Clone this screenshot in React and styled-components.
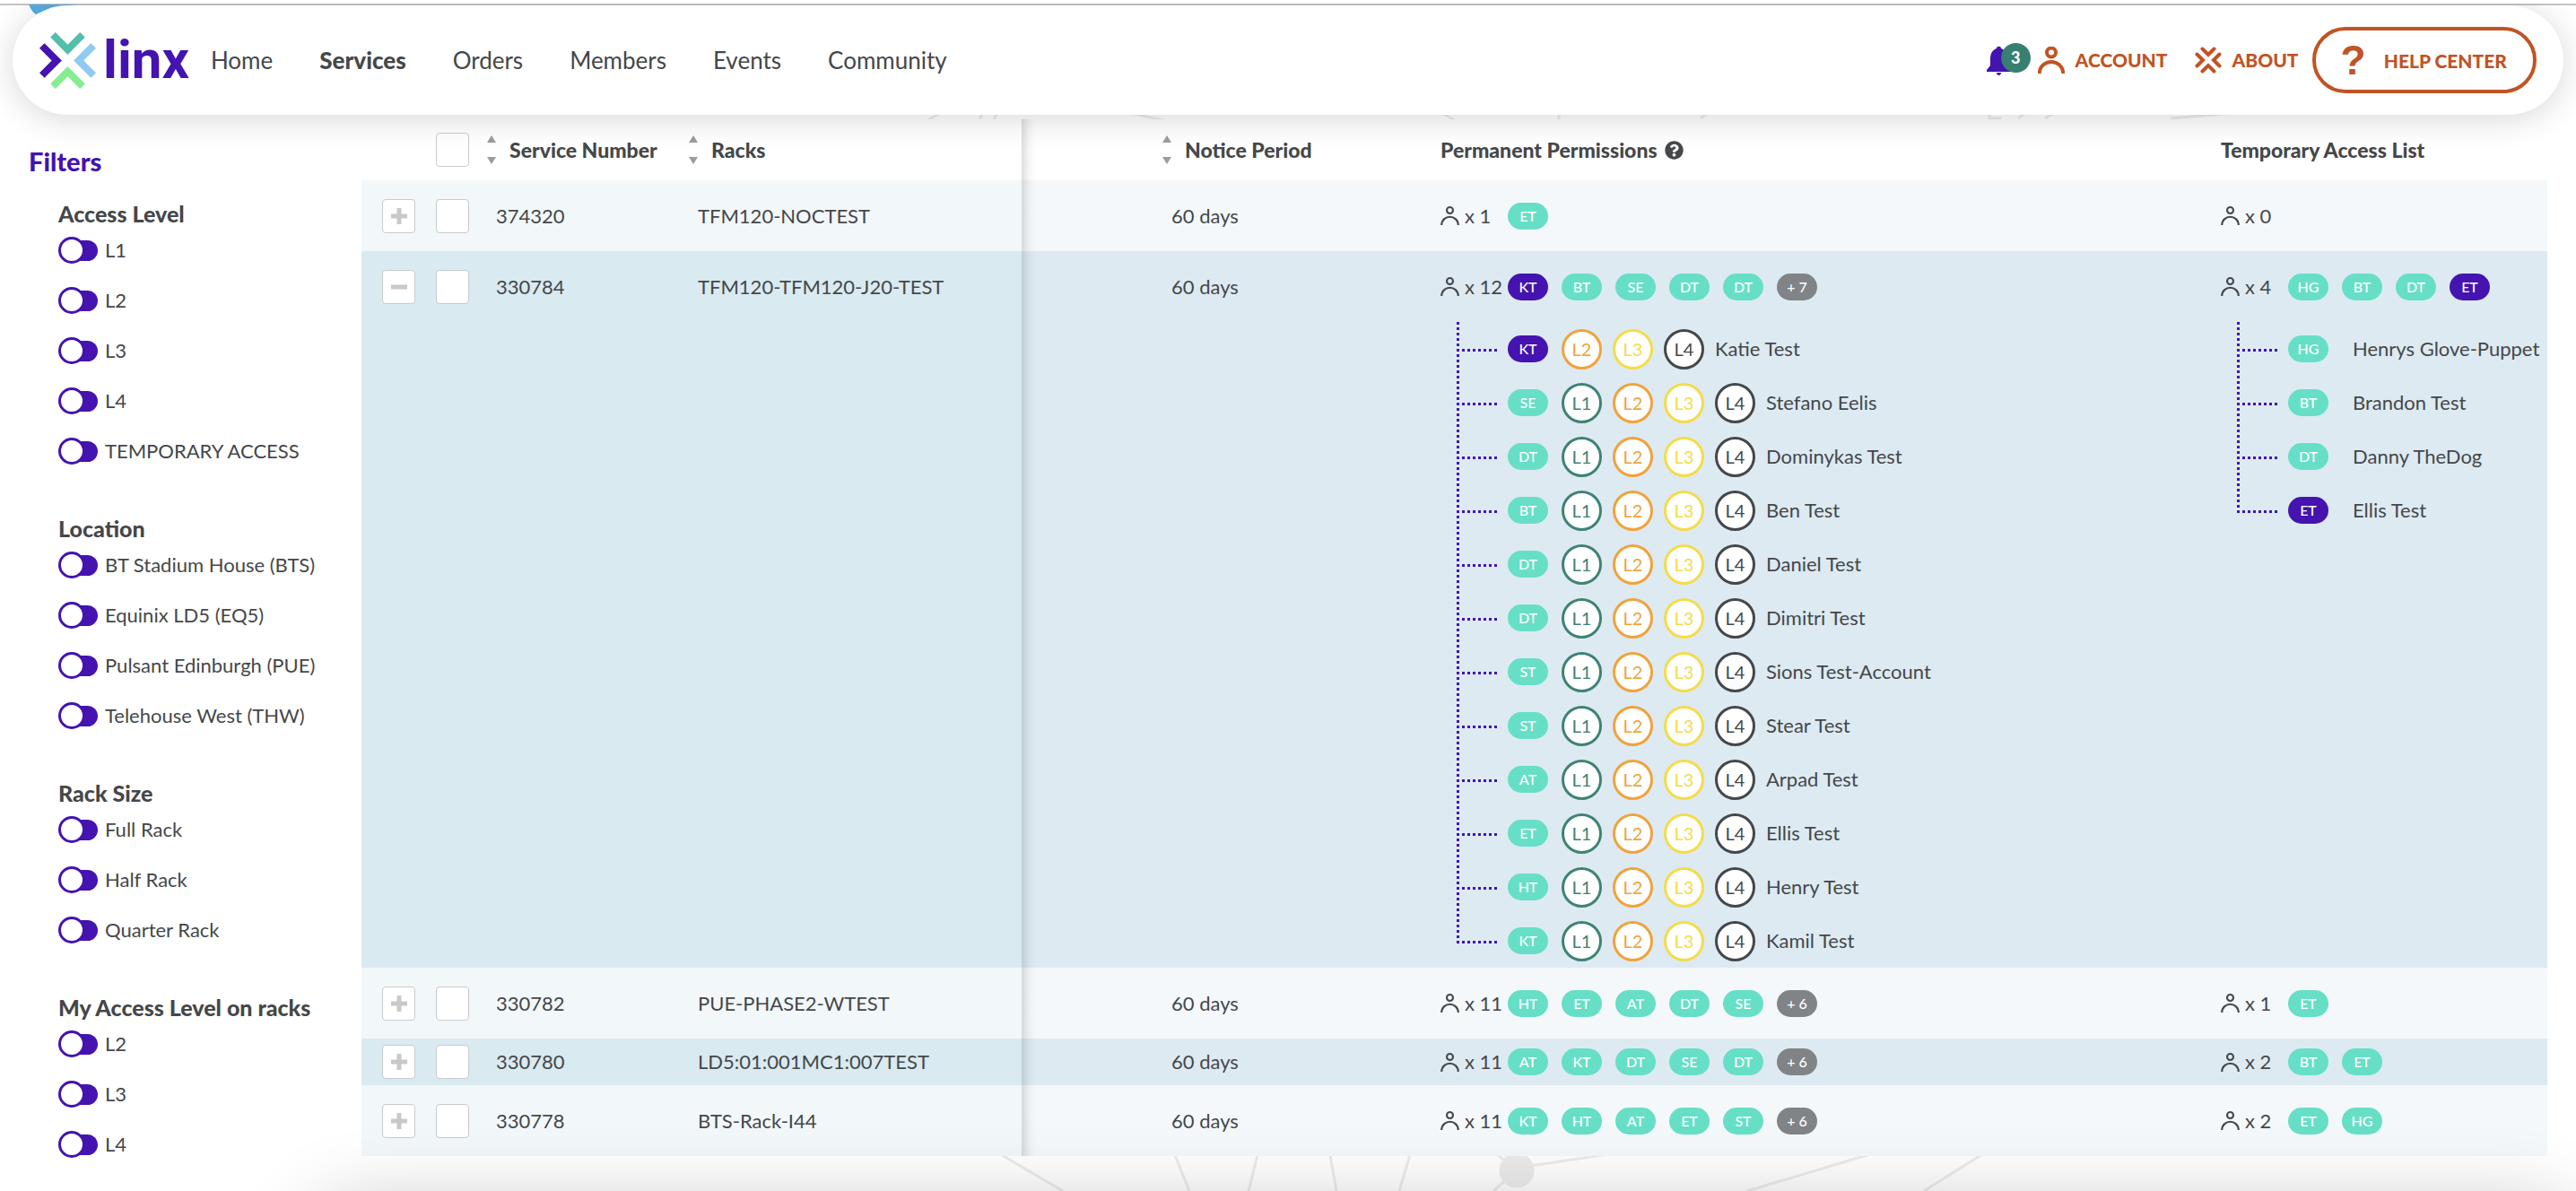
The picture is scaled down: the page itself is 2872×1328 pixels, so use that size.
import React, { useState } from 'react'
import styled, { createGlobalStyle } from 'styled-components'
import { FaQuestionCircle } from 'react-icons/fa'

const colors = {
  text: '#454749',
  purple: '#4413b0',
  teal: '#66dfc6',
  grey: '#818487',
  orange: '#c05425',
  green: '#377f70'
}

const levelColors = {
  L1: '#3f8374',
  L2: '#f0a33c',
  L3: '#f5dc4a',
  L4: '#454749'
}

const GlobalStyle = createGlobalStyle`
  *, *::before, *::after {
    box-sizing: border-box;
  }
  body {
    margin: 0;
    background: white;
    color: ${colors.text};
    font-family: Lato, 'Open Sans', sans-serif;
    font-size: 22px;
    line-height: 30px;
    overflow: hidden;
  }
`

const Page = styled.div`
  position: relative;
  min-height: 100vh;
  overflow: hidden;
  border-top: 4px solid white;
`

const Backdrop = styled.svg`
  position: absolute;
  top: -4px;
  left: 0;
  width: 100%;
`

const TopLine = styled.div`
  height: 2px;
  background: #c6c6c6;
`

const Header = styled.header`
  position: relative;
  z-index: 2;
  display: flex;
  align-items: center;
  height: 122px;
  margin: 0 14px;
  padding: 0 30px;
  border-radius: 61px;
  background: white;
  box-shadow: 0 4px 36px rgba(0, 0, 0, 0.16);
`

const Logo = styled.a`
  display: flex;
  align-items: center;
  gap: 8px;
  color: ${colors.purple};
  text-decoration: none;
`

const LogoName = styled.span`
  font-family: Roboto, sans-serif;
  font-size: 60px;
  line-height: 62px;
  font-weight: 700;
`

const Nav = styled.nav`
  display: flex;
  gap: 52px;
  margin-left: 24px;
`

const NavItem = styled.a`
  color: ${colors.text};
  font-size: 26px;
  font-weight: ${({ $active }) => ($active ? 900 : 400)};
  text-decoration: none;
`

const Actions = styled.div`
  display: flex;
  align-items: center;
  margin-left: auto;
`

const Bell = styled.button`
  position: relative;
  width: 50px;
  height: 38px;
  padding: 0;
  border: 0;
  background: none;
`

const BellIcon = styled.svg`
  display: block;
  width: 29px;
  height: 36px;
`

const Badge = styled.span`
  position: absolute;
  top: 0;
  right: 0;
  width: 33px;
  height: 33px;
  border-radius: 50%;
  background: ${colors.green};
  color: white;
  font-family: Lato, sans-serif;
  font-size: 18px;
  font-weight: 900;
  line-height: 32px;
  text-align: center;
`

const ActionLink = styled.a`
  display: flex;
  align-items: center;
  gap: 12px;
  margin-left: ${({ $gap }) => $gap}px;
  color: ${colors.orange};
  font-size: 21px;
  font-weight: 900;
  text-decoration: none;
`

const HelpButton = styled.button`
  display: flex;
  align-items: center;
  gap: 20px;
  height: 74px;
  margin-left: 15px;
  padding: 0 29px 0 28px;
  border: 4px solid ${colors.orange};
  border-radius: 37px;
  background: white;
  color: ${colors.orange};
  font-family: Lato, sans-serif;
  font-size: 21px;
  font-weight: 900;
`

const QuestionMark = styled.span`
  font-family: 'Liberation Sans', sans-serif;
  font-size: 46px;
  line-height: 50px;
`

const Main = styled.main`
  position: relative;
  display: flex;
  align-items: flex-start;
  margin-top: 5px;
  padding-right: 32px;
`

const Sidebar = styled.aside`
  flex: 0 0 403px;
  padding: 30px 0 0 32px;
`

const SidebarTitle = styled.h2`
  margin: 0 0 26px;
  color: ${colors.purple};
  font-size: 29px;
  line-height: 34px;
  font-weight: 900;
`

const FilterGroup = styled.fieldset`
  display: flex;
  flex-direction: column;
  gap: 26px;
  margin: 0 0 56px;
  padding: 0 0 0 33px;
  border: 0;
`

const FilterTitle = styled.legend`
  margin-bottom: 11px;
  padding: 0;
  font-size: 25px;
  font-weight: 900;
`

const FilterLabel = styled.label`
  display: flex;
  align-items: center;
  gap: 8px;
  height: 30px;
`

const Toggle = styled.input`
  appearance: none;
  position: relative;
  width: 44px;
  height: 30px;
  margin: 0;
  &::before {
    content: '';
    position: absolute;
    top: 4px;
    left: 6px;
    width: 38px;
    height: 23px;
    border-radius: 12px;
    background: ${colors.purple};
  }
  &::after {
    content: '';
    position: absolute;
    top: 0;
    left: ${({ checked }) => (checked ? 14 : 0)}px;
    width: 30px;
    height: 30px;
    border: 3px solid ${colors.purple};
    border-radius: 50%;
    background: white;
  }
`

const Table = styled.table`
  flex: 1;
  width: 100%;
  min-width: 0;
  table-layout: fixed;
  border-collapse: collapse;
  background: white;
`

const HeadCell = styled.th`
  height: 68px;
  padding: 0;
  font-size: 23px;
  font-weight: 900;
  text-align: left;
  white-space: nowrap;
`

const HeadContent = styled.div`
  display: flex;
  align-items: center;
  gap: ${({ $gap }) => $gap || 15}px;
`

const SortButton = styled.button`
  display: flex;
  padding: 0;
  border: 0;
  background: none;
`

const Row = styled.tr`
  background: ${({ $dark }) => ($dark ? '#ddeaf2' : '#f4f8fb')};
`

const Cell = styled.td`
  padding: 0 0 0 ${({ $indent }) => $indent || 0}px;
  background: ${({ $pinned, $dark }) => $pinned && ($dark ? '#d9eaf1' : '#f2f7fa')};
  vertical-align: top;
  white-space: nowrap;
`

const Edge = styled.td`
  padding: 0;
  background: linear-gradient(to right, rgba(0, 0, 0, 0.13), rgba(0, 0, 0, 0.04) 8px, transparent 16px);
`

const Line = styled.div`
  display: flex;
  align-items: center;
  height: ${({ $compact }) => ($compact ? 52 : 79)}px;
`

const CheckBox = styled.input`
  appearance: none;
  display: block;
  width: 37px;
  height: 38px;
  margin: 0 0 0 9px;
  border: 1px solid #c8cbcd;
  border-radius: 4px;
  background: white;
`

const ExpandButton = styled.button`
  display: flex;
  align-items: center;
  justify-content: center;
  width: 37px;
  height: 38px;
  padding: 0;
  border: 1px solid #c8cbcd;
  border-radius: 4px;
  background: white;
`

const Count = styled.span`
  display: flex;
  align-items: center;
  gap: 6px;
  width: 75px;
`

const Pills = styled.div`
  display: flex;
  gap: 15px;
`

const Pill = styled.span`
  width: 45px;
  height: 30px;
  border-radius: 15px;
  background: ${({ $color }) => $color || colors.teal};
  color: white;
  font-size: 16px;
  font-weight: 500;
  line-height: 30px;
  text-align: center;
`

const People = styled.ul`
  margin: 0;
  padding: 0;
  list-style: none;
`

const Person = styled.li`
  display: flex;
  align-items: center;
  height: 60px;
`

// dotted tree connector, the last one stops at its own branch
const Branch = styled.span`
  align-self: stretch;
  width: 75px;
  background-image:
    repeating-linear-gradient(to bottom, ${colors.purple} 0 3px, transparent 3px 6px),
    repeating-linear-gradient(to right, ${colors.purple} 0 3px, transparent 3px 6px);
  background-position: 18px 0, 24px 30px;
  background-size: 3px ${({ $last }) => ($last ? '33px' : '100%')}, 39px 3px;
  background-repeat: no-repeat;
`

const Levels = styled.span`
  display: flex;
  gap: 12px;
  margin: 0 12px 0 15px;
`

const Level = styled.span`
  width: 45px;
  height: 45px;
  border: 3px solid ${({ $color }) => $color};
  border-radius: 50%;
  background: white;
  color: ${({ $color }) => $color};
  font-size: 20px;
  line-height: 39px;
  text-align: center;
`

const FooterShade = styled.div`
  position: absolute;
  z-index: 3;
  top: 100%;
  left: 350px;
  right: 0;
  height: 100px;
  border-radius: 60px;
  box-shadow: 0 0 90px rgba(0, 0, 0, 0.24);
`

const Chevrons = ({ size, fills }) => (
  <svg width={size} height={size} viewBox="0 0 62 62" aria-hidden="true">
    {fills.map((fill, i) => (
      <path
        key={i}
        fill={fill}
        transform={`rotate(${i * 90} 31 31)`}
        d="M12 5.5 L17.5 0 L31 13.5 L44.5 0 L50 5.5 L31 24.5 Z"
      />
    ))}
  </svg>
)

// same mark as in the logo, drawn heavier for the small size
const AboutIcon = () => (
  <svg width="30" height="30" viewBox="0 0 30 30" fill="none" stroke="currentColor" strokeWidth="4" strokeLinecap="round" aria-hidden="true">
    {[0, 90, 180, 270].map(angle => (
      <path key={angle} transform={`rotate(${angle} 15 15)`} d="M8.5 2.5 L15 9 L21.5 2.5" />
    ))}
  </svg>
)

const PersonIcon = ({ size, stroke }) => (
  <svg width={size} height={size} viewBox="0 0 30 30" fill="none" stroke="currentColor" strokeWidth={stroke} aria-hidden="true">
    <circle cx="15" cy="6.5" r="5" />
    <path d="M1.7 30 C2.4 12.5 27.6 12.5 28.3 30" />
  </svg>
)

const SortIcon = () => (
  <svg width="10" height="32" viewBox="0 0 10 32" fill="#9c9c9c" aria-hidden="true">
    <path d="M5 0 L10 8 H0 Z" />
    <path d="M5 32 L10 24 H0 Z" />
  </svg>
)

const ExpandIcon = ({ open }) => (
  <svg width="18" height="18" viewBox="0 0 18 18" stroke="#c9c9c9" strokeWidth="5" aria-hidden="true">
    <path d="M0 9 H18" />
    {!open && <path d="M9 0 V18" />}
  </svg>
)

const navItems = ['Home', 'Services', 'Orders', 'Members', 'Events', 'Community']

const filters = [
  { title: 'Access Level', options: ['L1', 'L2', 'L3', 'L4', 'TEMPORARY ACCESS'] },
  {
    title: 'Location',
    options: ['BT Stadium House (BTS)', 'Equinix LD5 (EQ5)', 'Pulsant Edinburgh (PUE)', 'Telehouse West (THW)']
  },
  { title: 'Rack Size', options: ['Full Rack', 'Half Rack', 'Quarter Rack'] },
  { title: 'My Access Level on racks', options: ['L2', 'L3', 'L4'] }
]

const allLevels = ['L1', 'L2', 'L3', 'L4']

const services = [
  { id: '374320', rack: 'TFM120-NOCTEST', permanent: { count: 1, users: ['ET'] }, temporary: { count: 0, users: [] } },
  {
    id: '330784',
    rack: 'TFM120-TFM120-J20-TEST',
    permanent: {
      count: 12,
      users: ['KT*', 'BT', 'SE', 'DT', 'DT'],
      more: 7,
      people: [
        { initials: 'KT*', name: 'Katie Test', levels: ['L2', 'L3', 'L4'] },
        { initials: 'SE', name: 'Stefano Eelis', levels: allLevels },
        { initials: 'DT', name: 'Dominykas Test', levels: allLevels },
        { initials: 'BT', name: 'Ben Test', levels: allLevels },
        { initials: 'DT', name: 'Daniel Test', levels: allLevels },
        { initials: 'DT', name: 'Dimitri Test', levels: allLevels },
        { initials: 'ST', name: 'Sions Test-Account', levels: allLevels },
        { initials: 'ST', name: 'Stear Test', levels: allLevels },
        { initials: 'AT', name: 'Arpad Test', levels: allLevels },
        { initials: 'ET', name: 'Ellis Test', levels: allLevels },
        { initials: 'HT', name: 'Henry Test', levels: allLevels },
        { initials: 'KT', name: 'Kamil Test', levels: allLevels }
      ]
    },
    temporary: {
      count: 4,
      users: ['HG', 'BT', 'DT', 'ET*'],
      people: [
        { initials: 'HG', name: 'Henrys Glove-Puppet' },
        { initials: 'BT', name: 'Brandon Test' },
        { initials: 'DT', name: 'Danny TheDog' },
        { initials: 'ET*', name: 'Ellis Test' }
      ]
    }
  },
  {
    id: '330782',
    rack: 'PUE-PHASE2-WTEST',
    permanent: { count: 11, users: ['HT', 'ET', 'AT', 'DT', 'SE'], more: 6 },
    temporary: { count: 1, users: ['ET'] }
  },
  {
    id: '330780',
    rack: 'LD5:01:001MC1:007TEST',
    compact: true,
    permanent: { count: 11, users: ['AT', 'KT', 'DT', 'SE', 'DT'], more: 6 },
    temporary: { count: 2, users: ['BT', 'ET'] }
  },
  {
    id: '330778',
    rack: 'BTS-Rack-I44',
    permanent: { count: 11, users: ['KT', 'HT', 'AT', 'ET', 'ST'], more: 6 },
    temporary: { count: 2, users: ['ET', 'HG'] }
  }
]

// a star after the initials marks the highlighted user
const UserPill = ({ initials }) => (
  <Pill $color={initials.endsWith('*') ? colors.purple : colors.teal}>{initials.replace('*', '')}</Pill>
)

const FilterOption = ({ name }) => {
  const [on, setOn] = useState(false)
  return (
    <FilterLabel>
      <Toggle type="checkbox" checked={on} onChange={() => setOn(!on)} />
      {name}
    </FilterLabel>
  )
}

const SortableHead = ({ children }) => (
  <HeadCell scope="col">
    <HeadContent>
      <SortButton aria-label={`Sort by ${children}`}>
        <SortIcon />
      </SortButton>
      {children}
    </HeadContent>
  </HeadCell>
)

const Access = ({ access, compact, open }) => (
  <>
    <Line $compact={compact}>
      <Count>
        <PersonIcon size={21} stroke={3} />
        <span>x {access.count}</span>
      </Count>
      <Pills>
        {access.users.map((initials, i) => (
          <UserPill key={i} initials={initials} />
        ))}
        {access.more && <Pill $color={colors.grey}>+ {access.more}</Pill>}
      </Pills>
    </Line>
    {open && access.people && (
      <People>
        {access.people.map(({ initials, name, levels = [] }, i) => (
          <Person key={name}>
            <Branch $last={i === access.people.length - 1} />
            <UserPill initials={initials} />
            <Levels>
              {levels.map(level => (
                <Level key={level} $color={levelColors[level]}>{level}</Level>
              ))}
            </Levels>
            {name}
          </Person>
        ))}
      </People>
    )}
  </>
)

const ServiceRow = ({ service, dark }) => {
  const [open, setOpen] = useState(Boolean(service.permanent.people))
  const { id, rack, compact, permanent, temporary } = service
  return (
    <Row $dark={dark}>
      <Cell $pinned $dark={dark} $indent={23}>
        <Line $compact={compact}>
          <ExpandButton aria-label={`Details of ${id}`} aria-expanded={open} onClick={() => setOpen(!open)}>
            <ExpandIcon open={open} />
          </ExpandButton>
        </Line>
      </Cell>
      <Cell $pinned $dark={dark}>
        <Line $compact={compact}>
          <CheckBox type="checkbox" aria-label={`Select ${id}`} />
        </Line>
      </Cell>
      <Cell $pinned $dark={dark} $indent={10}>
        <Line $compact={compact}>{id}</Line>
      </Cell>
      <Cell $pinned $dark={dark} $indent={10}>
        <Line $compact={compact}>{rack}</Line>
      </Cell>
      <Edge />
      <Cell $indent={10}>
        <Line $compact={compact}>60 days</Line>
      </Cell>
      <Cell>
        <Access access={permanent} compact={compact} open={open} />
      </Cell>
      <Cell>
        <Access access={temporary} compact={compact} open={open} />
      </Cell>
    </Row>
  )
}

const TopBar = () => (
  <Header>
    <Logo href="#" aria-label="linx">
      <Chevrons size={63} fills={['#53bfa8', '#8fcbf0', '#86ec90', colors.purple]} />
      <LogoName>linx</LogoName>
    </Logo>
    <Nav>
      {navItems.map(item => (
        <NavItem key={item} href="#" $active={item === 'Services'}>{item}</NavItem>
      ))}
    </Nav>
    <Actions>
      <Bell aria-label="Notifications">
        <BellIcon viewBox="0 0 29 36" fill={colors.purple}>
          <path d="M12 5 C12 2 17 2 17 5 C22 7 24 11 24 17 V24 L28 29 V31 H1 V29 L5 24 V17 C5 11 7 7 12 5 Z" />
          <path d="M12 32 H17 C17 36 12 36 12 32 Z" />
        </BellIcon>
        <Badge>3</Badge>
      </Bell>
      <ActionLink href="#" $gap={8}>
        <PersonIcon size={30} stroke={4} />
        ACCOUNT
      </ActionLink>
      <ActionLink href="#" $gap={30}>
        <AboutIcon />
        ABOUT
      </ActionLink>
      <HelpButton>
        <QuestionMark>?</QuestionMark>
        HELP CENTER
      </HelpButton>
    </Actions>
  </Header>
)

const App = () => (
  <>
    <GlobalStyle />
    <Page>
      <Backdrop viewBox="0 0 2872 1328" fill="none" stroke="#ececec" strokeWidth="3" aria-hidden="true">
        <path d="M1117 1288 L1185 1328 M1310 1288 L1326 1328 M1402 1288 L1392 1328 M1483 1288 L1490 1328 M1572 1288 L1560 1328" />
        <path d="M1670 1288 L1680 1296 M1706 1300 L1800 1286 M1680 1315 L1665 1328 M1948 1328 L2085 1287 M2145 1328 L2210 1287" />
        <path d="M1034 134 L1060 120 M1092 134 L1098 120 M1108 134 L1114 120 M1298 134 L1250 124 M1622 134 L1600 122 M1738 120 V134 M1896 132 L1912 120" />
        <path d="M2218 120 V132 H2232 M2250 132 L2266 120 M2280 132 L2300 120 M2420 132 L2490 126" />
        <circle cx="1691" cy="1305" r="18" fill="#ececec" />
        <path d="M32 5 C34 10 37 14 40 16 C52 10 66 7 86 5 Z" fill="#58aee6" stroke="none" />
      </Backdrop>
      <TopLine />
      <TopBar />
      <Main>
        <Sidebar>
          <SidebarTitle>Filters</SidebarTitle>
          {filters.map(({ title, options }) => (
            <FilterGroup key={title}>
              <FilterTitle>{title}</FilterTitle>
              {options.map(name => (
                <FilterOption key={name} name={name} />
              ))}
            </FilterGroup>
          ))}
        </Sidebar>
        <Table>
          <colgroup>
            {[74, 66, 225, 371, 157, 310, 870, 364].map((width, i) => (
              <col key={i} width={width} />
            ))}
          </colgroup>
          <thead>
            <tr>
              <HeadCell as="td" />
              <HeadCell as="td">
                <CheckBox type="checkbox" aria-label="Select all" />
              </HeadCell>
              <SortableHead>Service Number</SortableHead>
              <SortableHead>Racks</SortableHead>
              <Edge />
              <SortableHead>Notice Period</SortableHead>
              <HeadCell scope="col">
                <HeadContent $gap={8}>
                  Permanent Permissions
                  <FaQuestionCircle size={21} />
                </HeadContent>
              </HeadCell>
              <HeadCell scope="col">Temporary Access List</HeadCell>
            </tr>
          </thead>
          <tbody>
            {services.map((service, i) => (
              <ServiceRow key={service.id} service={service} dark={i % 2 === 1} />
            ))}
          </tbody>
        </Table>
      </Main>
      <FooterShade />
    </Page>
  </>
)

export default App
